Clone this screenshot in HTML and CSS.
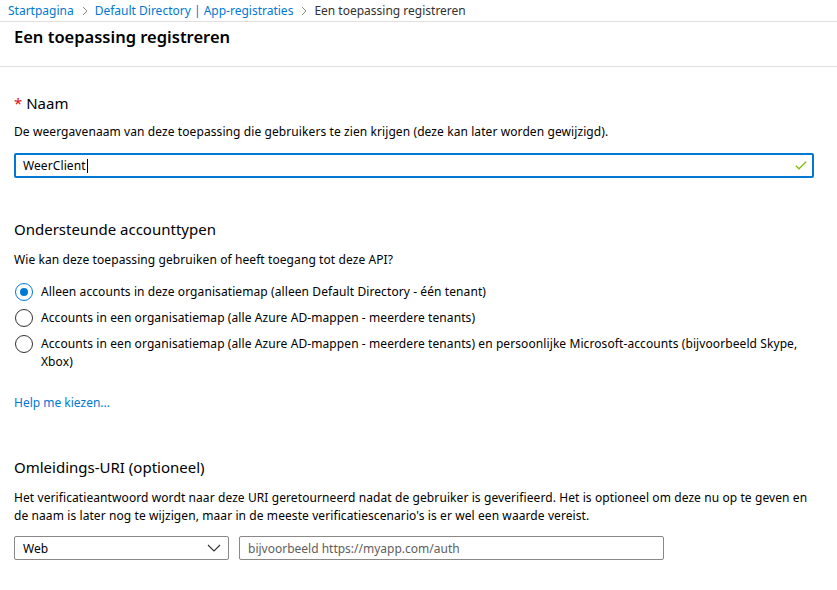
FILE: index.html
```html
<!DOCTYPE html>
<html lang="nl">
<head>
<meta charset="utf-8">
<link rel="stylesheet" href="styles.css">
</head>
<body>
<nav class="crumbs">
  <a class="crumb">Startpagina</a>
  <span class="sep"><svg width="8" height="10" viewBox="0 0 8 10"><path d="M2 1l4 4-4 4" fill="none" stroke="#8a8886" stroke-width="1"/></svg></span>
  <a class="crumb">Default Directory | App-registraties</a>
  <span class="sep"><svg width="8" height="10" viewBox="0 0 8 10"><path d="M2 1l4 4-4 4" fill="none" stroke="#8a8886" stroke-width="1"/></svg></span>
  <span class="current">Een toepassing registreren</span>
</nav>
<header class="head">
  <h1>Een toepassing registreren</h1>
</header>
<main class="content">
  <section class="sec sec-name">
    <h2><span class="req">*</span> Naam</h2>
    <p class="desc">De weergavenaam van deze toepassing die gebruikers te zien krijgen (deze kan later worden gewijzigd).</p>
    <div class="field focused">
      <span class="val">WeerClient</span><span class="caret"></span>
      <svg class="check" width="12" height="9" viewBox="0 0 12 9"><path d="M0.8 4.6l3.2 3.2 7.2-7.2" fill="none" stroke="#7fba00" stroke-width="1.3"/></svg>
    </div>
  </section>

  <section class="sec sec-acc">
    <h2>Ondersteunde accounttypen</h2>
    <p class="desc">Wie kan deze toepassing gebruiken of heeft toegang tot deze API?</p>
    <ul class="radios">
      <li class="radio"><span class="dot on"></span><span class="lbl">Alleen accounts in deze organisatiemap (alleen Default Directory - één tenant)</span></li>
      <li class="radio"><span class="dot"></span><span class="lbl">Accounts in een organisatiemap (alle Azure AD-mappen - meerdere tenants)</span></li>
      <li class="radio"><span class="dot"></span><span class="lbl">Accounts in een organisatiemap (alle Azure AD-mappen - meerdere tenants) en persoonlijke Microsoft-accounts (bijvoorbeeld Skype, Xbox)</span></li>
    </ul>
    <a class="help">Help me kiezen...</a>
  </section>

  <section class="sec sec-uri">
    <h2>Omleidings-URI (optioneel)</h2>
    <p class="desc para">Het verificatieantwoord wordt naar deze URI geretourneerd nadat de gebruiker is geverifieerd. Het is optioneel om deze nu op te geven en de naam is later nog te wijzigen, maar in de meeste verificatiescenario's is er wel een waarde vereist.</p>
    <div class="uri-row">
      <div class="box select"><span>Web</span><svg width="14" height="8" viewBox="0 0 14 8"><path d="M1 1l6 6 6-6" fill="none" stroke="#323130" stroke-width="1.1"/></svg></div>
      <div class="box url"><span class="ph">bijvoorbeeld https://myapp.com/auth</span></div>
    </div>
  </section>
</main>
</body>
</html>
```
FILE: styles.css
```css
* { box-sizing: border-box; }
html, body { margin: 0; padding: 0; background: #fff; }
body {
  font-family: "Noto Sans", "Open Sans", sans-serif;
  font-size: 12px;
  color: #323130;
  width: 837px;
  height: 590px;
  overflow: hidden;
}
.crumbs {
  height: 26px;
  margin-top: -4px;
  padding: 4px 0 0 8px;
  border-bottom: 1px solid #e1dfdd;
  display: flex;
  align-items: center;
  font-size: 12px;
  line-height: 16px;
}
.crumb { color: #0078d4; }
.sep { display: inline-flex; align-items: center; padding: 0 6px 0 7px; }
.current { color: #323130; }
.head {
  height: 45px;
  border-bottom: 1px solid #e1dfdd;
  padding: 3px 14px 0;
}
.head h1 {
  margin: 0;
  font-size: 16.5px;
  font-weight: 600;
  line-height: 24px;
  color: #000;
}
.content { padding: 0 14px; width: 828px; }
.sec h2 {
  margin: 0;
  font-size: 15px;
  font-weight: 400;
  line-height: 20px;
  color: #000;
}
.req { color: #e00b1c; }
.desc { margin: 0; line-height: 18px; color: #000; letter-spacing: 0.09px; }
.sec-name { padding-top: 26px; }
.sec-name .desc { margin-top: 10px; }
.field {
  margin-top: 12px;
  height: 25px;
  width: 800px;
  border: 2px solid #0078d4;
  border-radius: 2px;
  display: flex;
  align-items: center;
  padding: 0 5px 0 7px;
}
.val { color: #000; letter-spacing: 0.09px; }
.caret { width: 1px; height: 14px; background: #000; margin-left: 1px; }
.check { margin-left: auto; }
.sec-acc { padding-top: 41px; }
.sec-acc .desc { margin-top: 12px; }
.radios { list-style: none; margin: 14px 0 0; padding: 0; }
.radio { display: flex; align-items: flex-start; gap: 8px; margin-bottom: 8px; }
.dot {
  flex: none;
  width: 18px;
  height: 18px;
  border: 1px solid #323130;
  border-radius: 50%;
  position: relative;
  margin-left: 1px;
}
.dot.on { border-color: #0078d4; }
.dot.on::after {
  content: "";
  position: absolute;
  left: 4px; top: 4px;
  width: 8px; height: 8px;
  border-radius: 50%;
  background: #0078d4;
}
.lbl { line-height: 18px; color: #000; letter-spacing: 0.09px; }
.help { display: block; margin-top: 23px; color: #0078d4; line-height: 18px; }
.sec-uri { padding-top: 45px; }
.sec-uri .desc { margin-top: 12px; }
.uri-row { display: flex; gap: 10px; margin-top: 11px; }
.box {
  height: 24px;
  border: 1px solid #8a8886;
  border-radius: 2px;
  display: flex;
  align-items: center;
  padding: 0 8px;
}
.select { width: 215px; justify-content: space-between; color: #000; padding-right: 7px; }
.url { width: 425px; }
.ph { color: #605e5c; }
```
